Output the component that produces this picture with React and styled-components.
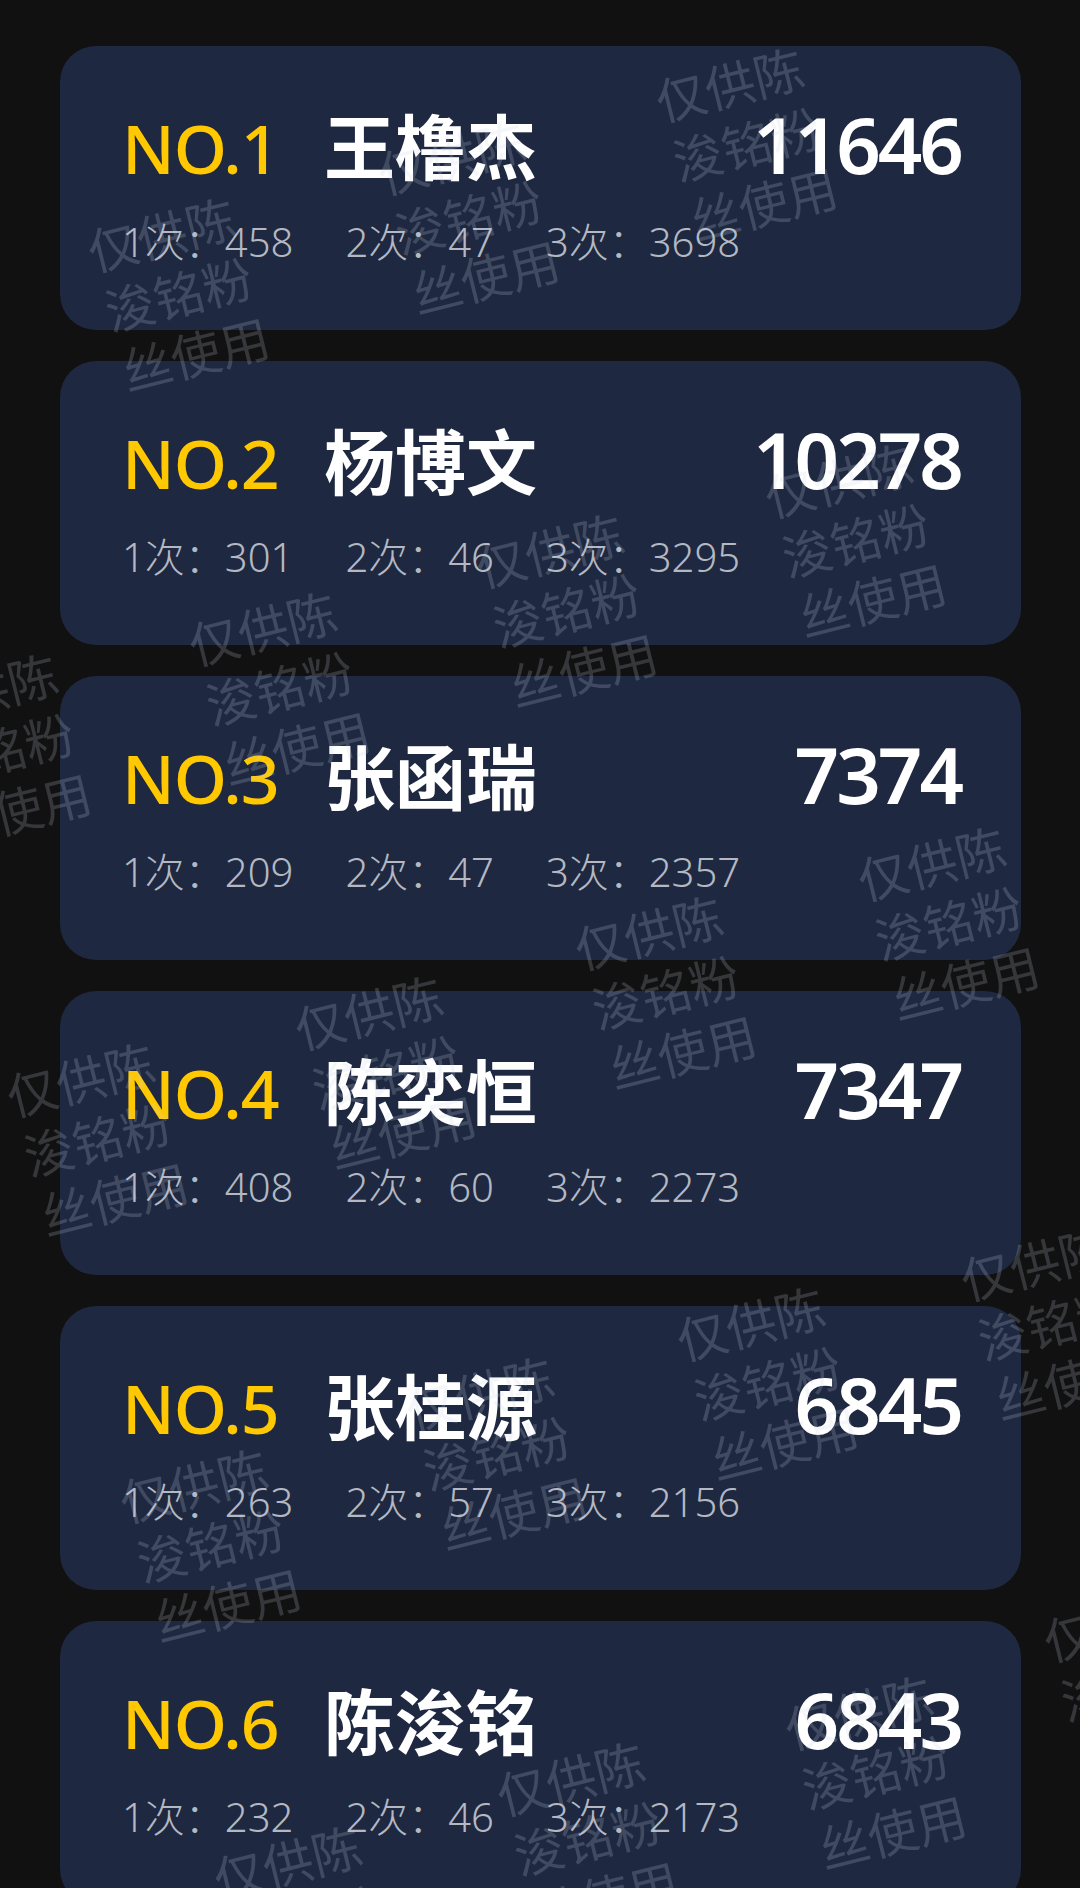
import React from "react"
import styled, { createGlobalStyle } from "styled-components"

const GlobalStyle = createGlobalStyle`
  html, body {
    margin: 0;
    padding: 0;
    background: #111111;
  }
  body {
    font-family: "Noto Sans", "Noto Sans CJK SC", sans-serif;
  }
`

const ranking = [
  { name: "王橹杰", score: 11646, first: 458, second: 47, third: 3698 },
  { name: "杨博文", score: 10278, first: 301, second: 46, third: 3295 },
  { name: "张函瑞", score: 7374, first: 209, second: 47, third: 2357 },
  { name: "陈奕恒", score: 7347, first: 408, second: 60, third: 2273 },
  { name: "张桂源", score: 6845, first: 263, second: 57, third: 2156 },
  { name: "陈浚铭", score: 6843, first: 232, second: 46, third: 2173 },
]

// centres of the watermark stamps, page coordinates
const marks = [
  [746, 142], [178, 292], [468, 215], [855, 538], [566, 608],
  [279, 686], [0, 748], [665, 990], [948, 921], [385, 1070],
  [97, 1137], [767, 1381], [1051, 1321], [496, 1451], [210, 1543],
  [875, 1770], [587, 1836], [304, 1920], [1134, 1682],
]

function App() {
  return (
    <Page>
      <GlobalStyle />
      {ranking.map((item, index) => (
        <Card key={item.name}>
          <TitleRow>
            <Rank>NO.{index + 1}</Rank>
            <Name>{item.name}</Name>
            <Score>{item.score}</Score>
          </TitleRow>
          <Stats>
            <Stat>1次：{item.first}</Stat>
            <Stat>2次：{item.second}</Stat>
            <Stat>3次：{item.third}</Stat>
          </Stats>
        </Card>
      ))}
      {marks.map(([x, y], i) => (
        <Watermark key={i} $x={x} $y={y}>
          <span>仅供陈</span>
          <span>浚铭粉</span>
          <span>丝使用</span>
        </Watermark>
      ))}
    </Page>
  )
}

export default App

const Page = styled.div`
  position: relative;
  width: 1080px;
  height: 1888px;
  box-sizing: border-box;
  padding: 46px 59px 0 60px;
  display: flex;
  flex-direction: column;
  gap: 31px;
  overflow: hidden;
  background: #111111;
`

const Card = styled.div`
  flex: none;
  height: 284px;
  box-sizing: border-box;
  padding: 57px 60px 0 62px;
  border-radius: 36px;
  background: #1e2840;
  display: flex;
  flex-direction: column;
`

const TitleRow = styled.div`
  display: flex;
  align-items: baseline;
  height: 80px;
  line-height: 80px;
`

const Rank = styled.div`
  width: 202px;
  flex: none;
  color: #ffc800;
  font-family: "Noto Sans", sans-serif;
  font-weight: 500;
  font-size: 68px;
  letter-spacing: -1px;
`

const Name = styled.div`
  color: #ffffff;
  font-family: "Noto Sans CJK SC", sans-serif;
  font-weight: 700;
  font-size: 71px;
`

const Score = styled.div`
  margin-left: auto;
  color: #ffffff;
  font-family: "Noto Sans", sans-serif;
  font-weight: 600;
  font-size: 78px;
  letter-spacing: -3px;
`

const Stats = styled.div`
  display: flex;
  gap: 52px;
  margin-top: 35px;
  line-height: 48px;
  font-size: 40px;
  font-weight: 300;
  color: #b4b8c2;
  font-family: "Noto Sans", "Noto Sans CJK SC", sans-serif;
`

const Stat = styled.span`
  white-space: nowrap;
`

const Watermark = styled.div`
  position: absolute;
  left: ${p => p.$x}px;
  top: ${p => p.$y}px;
  transform: translate(-50%, -50%) rotate(-14deg);
  display: flex;
  flex-direction: column;
  align-items: flex-start;
  font-family: "Noto Sans CJK SC", sans-serif;
  font-size: 50px;
  line-height: 62px;
  color: rgba(200, 210, 230, 0.2);
  white-space: nowrap;
  pointer-events: none;

  span:nth-child(2) { padding-left: 2px; }
  span:nth-child(3) { padding-left: 4px; }
`
